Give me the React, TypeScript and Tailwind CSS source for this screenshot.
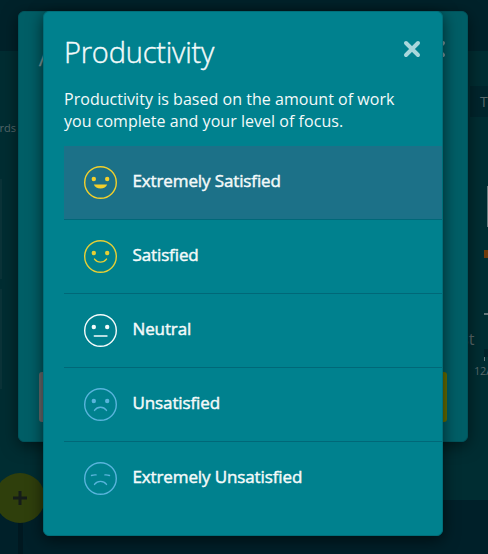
import type { ReactNode } from 'react';

type Mood = 'great' | 'good' | 'neutral' | 'bad' | 'awful';

const options: { mood: Mood; label: string; color: string; row: string }[] = [
  { mood: 'great', label: 'Extremely Satisfied', color: 'text-[#f3d02b]', row: 'bg-[#1c7188] border-[#006878]' },
  { mood: 'good', label: 'Satisfied', color: 'text-[#e6cf35]', row: 'border-[#006878]' },
  { mood: 'neutral', label: 'Neutral', color: 'text-[#f4fbfb]', row: 'border-[#006878]' },
  { mood: 'bad', label: 'Unsatisfied', color: 'text-[#58b4dc]', row: 'border-[#006878]' },
  { mood: 'awful', label: 'Extremely Unsatisfied', color: 'text-[#58b4dc]', row: 'border-transparent' },
];

const mouths: Record<Mood, ReactNode> = {
  great: <path d="M10.3 19H23.7Q22 23 17 23T10.3 19Z" fill="currentColor" stroke="none" />,
  good: <path d="M11 19.6Q13.3 22.6 17 22.6T23 19.6" />,
  neutral: <path d="M10.8 22.5H23.5" />,
  bad: <path d="M11 22.9Q13.3 19.7 17 19.7T23 22.9" />,
  awful: <path d="M11 22.9Q13.3 19.9 17 19.9T23 22.9" />,
};

function Face({ mood }: { mood: Mood }) {
  return (
    <svg width="33" height="33" viewBox="0.5 0.5 33 33" fill="none" stroke="currentColor" strokeWidth="1.4" strokeLinecap="round">
      <circle cx="17" cy="17" r="15.8" />
      {mood === 'awful' ? (
        <path d="M8 14Q10 13.2 12.6 13.4M21.4 13.4Q24 13.2 26 14" />
      ) : (
        <g fill="currentColor" stroke="none">
          <circle cx="10.3" cy="13.5" r="2.2" />
          <circle cx="23.7" cy="13.5" r="2.2" />
        </g>
      )}
      {mouths[mood]}
    </svg>
  );
}

function Close() {
  return (
    <svg width="18" height="18" viewBox="0 0 18 18" fill="none" stroke="currentColor" strokeWidth="4" strokeLinecap="round">
      <path d="M3 3L15 15M15 3L3 15" />
    </svg>
  );
}

function Dashboard() {
  return (
    <div className="flex h-full flex-col bg-[#002d32] text-[#57686b]">
      <div className="h-[51px] shrink-0 bg-[#00222a]" />
      <div className="flex h-[449px] shrink-0 justify-between">
        <div className="w-[18px] pt-[70px] text-[11px] leading-[14px]">
          <div className="flex w-[16px] justify-end whitespace-nowrap">rds</div>
          <div className="mt-[44px] h-[100px] w-[2px] bg-[#0b3338]" />
          <div className="mt-[10px] h-[100px] w-[2px] bg-[#0b3338]" />
        </div>
        <div className="flex w-[20px] flex-col items-end pt-[35px]">
          <div className="flex h-[31px] w-[18px] shrink-0 items-center overflow-hidden bg-[#00252c] pl-[10px] text-[14px]">T</div>
          <div className="mt-[69px] h-[41px] w-px shrink-0 bg-[#6a7d80]" />
          <div className="mt-[23px] h-[8px] w-[4px] shrink-0 bg-[#703b0c]" />
          <div className="mt-[55px] h-[2px] w-[4px] shrink-0 bg-[#63777a]" />
          <div className="mt-[14px] flex h-[20px] w-[20px] shrink-0 items-center justify-start text-[16px]">
            <span className="-ml-[7px]">st</span>
          </div>
          <div className="h-[8px] w-[4px] shrink-0 bg-[#00232a]" />
          <div className="mr-[3px] h-[4px] w-px shrink-0 bg-[#63777a]" />
          <div className="mt-[3px] w-[14px] shrink-0 overflow-hidden text-[11px] leading-[14px] tracking-[-0.2px]">12A</div>
        </div>
      </div>
      <div className="grow bg-[#002029]" />
    </div>
  );
}

export default function App() {
  return (
    <div className="relative h-[554px] w-[488px] overflow-hidden bg-[#00222a] font-['Open_Sans','Noto_Sans',sans-serif]">
      <Dashboard />
      <div className="absolute top-[489px] left-[18px] h-[65px] w-[5px] bg-[#001820]" />
      <div className="absolute top-[473px] -left-[5px] flex size-[50px] items-center justify-center rounded-full bg-[#2f3f0c] text-[#151c19]">
        <svg width="14" height="14" viewBox="0 0 14 14" stroke="currentColor" strokeWidth="3">
          <path d="M7 0V14M0 7H14" />
        </svg>
      </div>

      <section className="absolute top-[11px] left-[18px] flex h-[431px] w-[450px] flex-col justify-between rounded-[6px] border border-[#00545c] bg-[#005e66] px-[20px] pt-[26px] pb-[19px] shadow-[0_4px_16px_rgba(0,0,0,0.5)]">
        <div className="flex items-start justify-between text-[#7f9fa2]">
          <h2 className="text-[29px] leading-[33px] font-light [-webkit-text-stroke:0.4px_currentColor]">A</h2>
          <div className="mr-px pt-[2px]"><Close /></div>
        </div>
        <div className="flex h-[50px] justify-between">
          <div className="w-[195px] rounded-[3px] bg-[#676b6d]" />
          <div className="w-[195px] rounded-[3px] bg-[#667000]" />
        </div>
      </section>

      <section className="absolute top-[11px] left-[43px] h-[525px] w-[400px] rounded-[6px] border border-[#006f7a] bg-[#00818e] pt-[24px] pl-5 text-[#f4fafa] shadow-[0_4px_16px_rgba(0,0,0,0.6)]">
        <div className="flex items-start justify-between pr-[21px]">
          <h1 className="text-[29px] leading-[32px] font-light tracking-[-0.2px] [-webkit-text-stroke:0.4px_currentColor]">Productivity</h1>
          <button className="pt-[4px] text-[#a9d7dc]"><Close /></button>
        </div>
        <p className="mt-[20px] w-[350px] text-[16px] leading-[22px] tracking-[0.035px]">
          Productivity is based on the amount of work you complete and your level of focus.
        </p>
        <ul className="mt-[14px]">
          {options.map((o) => (
            <li key={o.mood} className={`flex h-[74px] items-center border-b pl-5 ${o.row}`}>
              <span className={`mr-[15.5px] ${o.color}`}><Face mood={o.mood} /></span>
              <span className="-mt-[3px] text-[17px] leading-6 tracking-[-0.12px] [-webkit-text-stroke:0.45px_currentColor]">{o.label}</span>
            </li>
          ))}
        </ul>
      </section>
    </div>
  );
}
